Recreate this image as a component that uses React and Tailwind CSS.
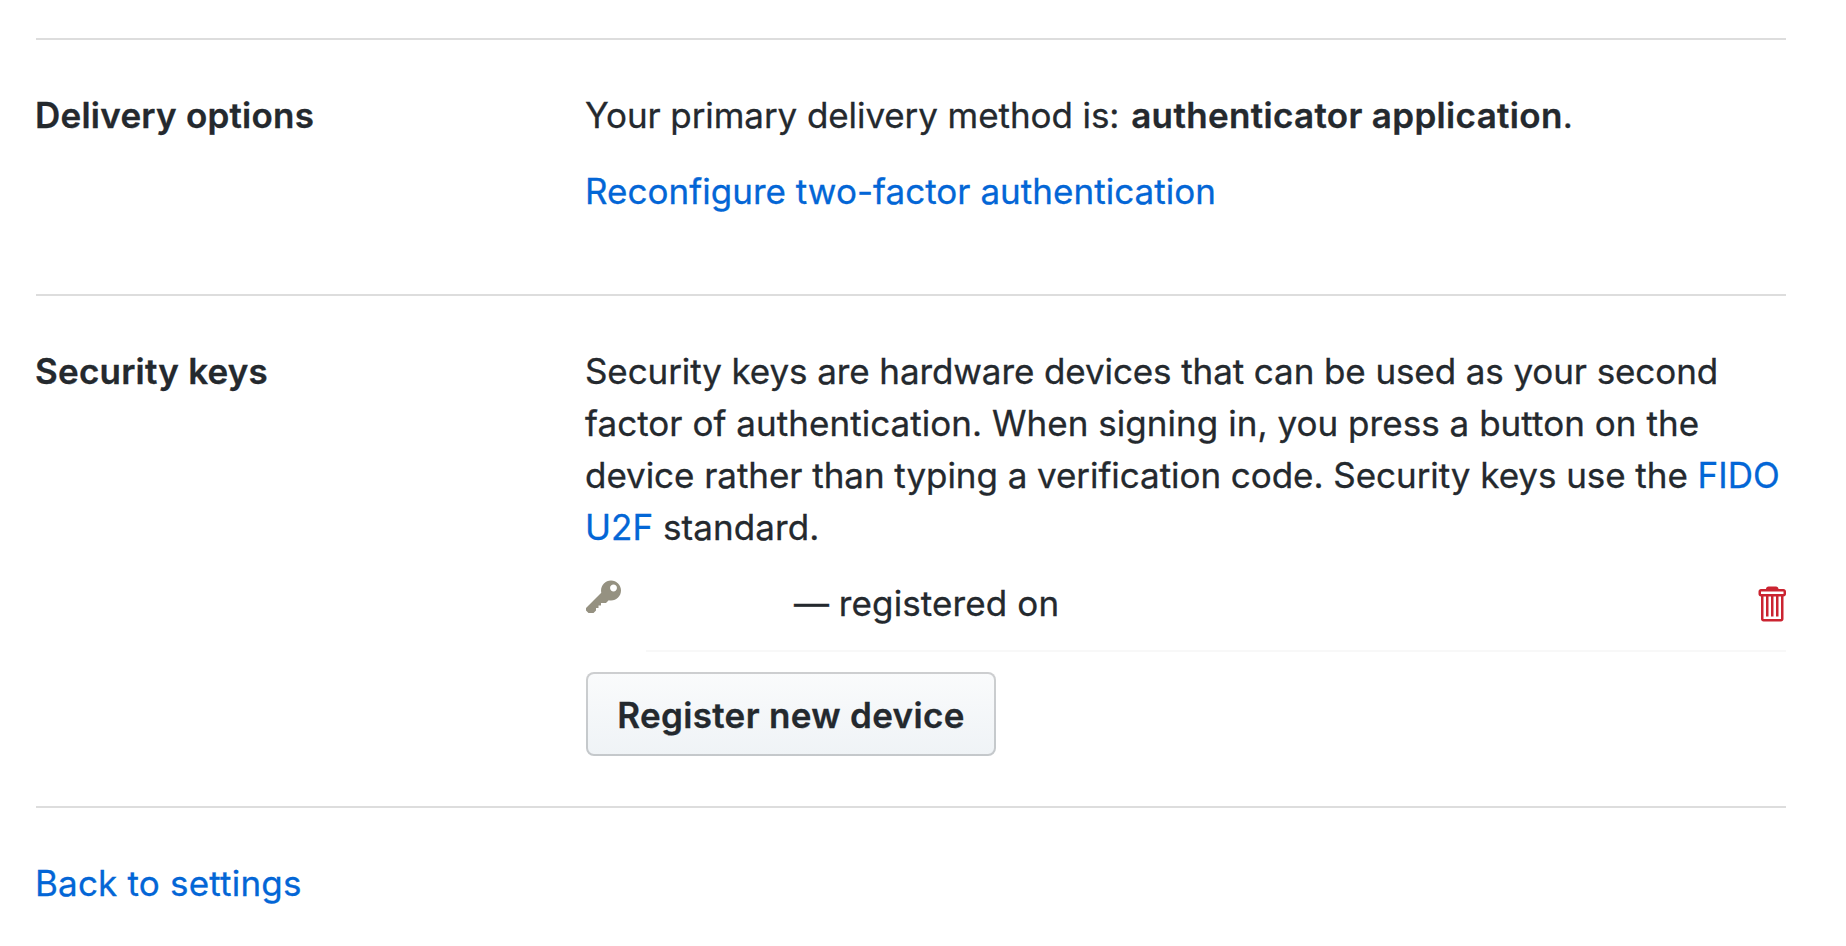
function KeyIcon() {
  return (
    <svg viewBox="0 0 14 16" className="h-10 w-[35px] fill-[#959181]" aria-hidden="true">
      <path
        fillRule="evenodd"
        d="M12.83 2.17C12.08 1.42 11.14 1.03 10 1c-1.13.03-2.08.42-2.83 1.17S6.04 3.86 6.01 5c0 .3.03.59.09.89L0 12v1l1 1h2l1-1v-1h1v-1h1v-1h2l1.09-1.11c.3.08.59.11.91.11 1.14-.03 2.08-.42 2.83-1.17S13.97 6.14 14 5c-.03-1.14-.42-2.08-1.17-2.83zM11 5.38c-.77 0-1.38-.61-1.38-1.38 0-.77.61-1.38 1.38-1.38.77 0 1.38.61 1.38 1.38 0 .77-.61 1.38-1.38 1.38z"
      />
    </svg>
  );
}

function TrashIcon() {
  return (
    <svg viewBox="0 0 12 16" className="h-10 w-[30px] fill-[#cb2431]" aria-hidden="true">
      <path
        fillRule="evenodd"
        d="M11 2H9c0-.55-.45-1-1-1H5c-.55 0-1 .45-1 1H2c-.55 0-1 .45-1 1v1c0 .55.45 1 1 1v9c0 .55.45 1 1 1h7c.55 0 1-.45 1-1V5c.55 0 1-.45 1-1V3c0-.55-.45-1-1-1zm-1 12H3V5h1v8h1V5h1v8h1V5h1v8h1V5h1v9zm1-10H2V3h9v1z"
      />
    </svg>
  );
}

function Link({ children, className = "" }) {
  return (
    <a href="#" className={`text-[#0366d6] ${className}`}>
      {children}
    </a>
  );
}

export default function App() {
  return (
    <main className="min-h-[946px] bg-white pt-[38px] pr-[60px] pl-9 font-['Inter',sans-serif] text-[35px] leading-[52px] whitespace-nowrap text-[#24292e] [-webkit-text-stroke-width:0.3px]">
      <section className="grid h-64 grid-cols-[550px_1fr] border-t-2 border-[#dddddd] pt-[49px]">
        <h2 className="-ml-px font-semibold tracking-[0.24px]">Delivery options</h2>
        <div className="-ml-px flex flex-col gap-6">
          <p>
            <span className="tracking-[-0.08px]">Your primary delivery method is:</span>{" "}
            <strong className="ml-[2px] font-semibold tracking-[0.34px]">authenticator application</strong>.
          </p>
          <p>
            <Link className="tracking-[0.03px]">Reconfigure two-factor authentication</Link>
          </p>
        </div>
      </section>

      <section className="grid h-[512px] grid-cols-[550px_1fr] border-t-2 border-[#dddddd] pt-[49px]">
        <h2 className="-ml-px font-semibold tracking-[0.22px]">Security keys</h2>
        <div>
          <p className="-ml-px">
            <span className="tracking-[-0.095px]">
              Security keys are hardware devices that can be used as your second
            </span>
            <br />
            <span className="tracking-[0.04px]">
              factor of authentication. When signing in, you press a button on the
            </span>
            <br />
            <span className="tracking-[-0.05px]">
              device rather than typing a verification code. Security keys use the
            </span>{" "}
            <Link>
              FIDO
              <br />
              U2F
            </Link>{" "}
            <span className="tracking-[0.1px]">standard.</span>
          </p>
          <div className="mt-6 flex">
            <div className="w-[60px] shrink-0 pt-px">
              <KeyIcon />
            </div>
            <div className="flex h-[75px] flex-1 items-start justify-between border-b-2 border-[#f8f8f8] pl-[148px]">
              <span>
                — <span className="tracking-[0.12px]">registered on</span>
              </span>
              <button type="button" aria-label="Delete" className="pt-[7px]">
                <TrashIcon />
              </button>
            </div>
          </div>
          <button
            type="button"
            className="mt-5 flex h-[84px] w-[410px] items-center justify-center rounded-lg border-2 border-[#1b1f23]/20 bg-linear-to-b from-[#fafbfc] to-[#eff3f6] bg-origin-border pt-0.5 font-semibold tracking-[0.32px]"
          >
            Register new device
          </button>
        </div>
      </section>

      <section className="border-t-2 border-[#dddddd] pt-[49px]">
        <Link className="-ml-px tracking-[0.19px]">Back to settings</Link>
      </section>
    </main>
  );
}
